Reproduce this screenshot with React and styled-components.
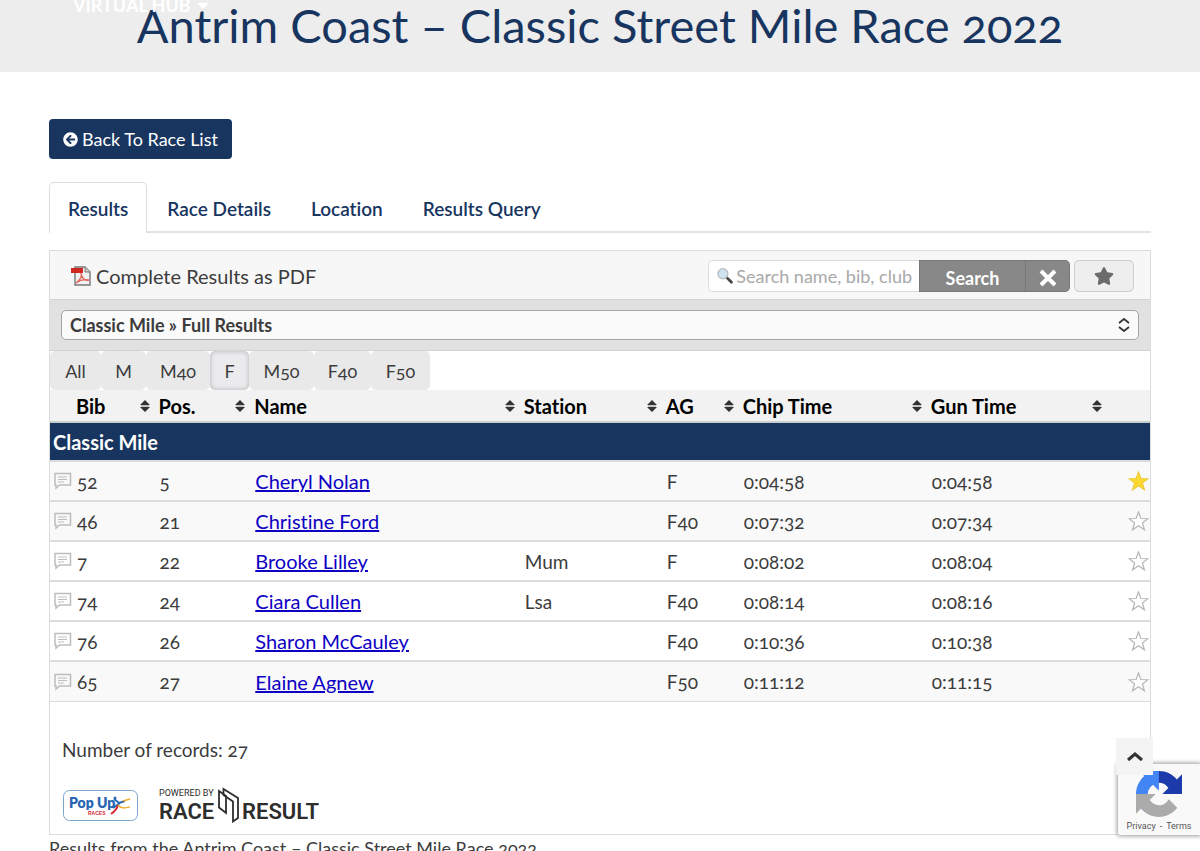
import React, { useState } from 'react'
import styled, { createGlobalStyle } from 'styled-components'
import { FaArrowCircleLeft, FaCaretDown, FaStar } from 'react-icons/fa'

const GlobalStyle = createGlobalStyle`
    * {
        box-sizing: border-box;
    }
    body {
        margin: 0;
        background: #fff;
        color: #3c3c3c;
        font-family: Lato, "Open Sans", sans-serif;
        font-size: 19px;
        font-variant-numeric: oldstyle-nums;
        font-variant-ligatures: no-common-ligatures;
    }
    button, input, select {
        font: inherit;
        color: inherit;
    }
`
const Screen = styled.div`
    position: relative;
    height: 100vh;
    overflow: hidden;
`
const Banner = styled.header`
    height: 72px;
    background: #ededed;
    text-align: center;
`
const Title = styled.h1`
    margin: 0;
    font-size: 47px;
    line-height: 50px;
    font-weight: 400;
    color: #17355f;
    white-space: nowrap;
`
const HubLink = styled.a`
    position: absolute;
    top: -6px;
    left: 73px;
    display: flex;
    align-items: center;
    gap: 3px;
    font-size: 18px;
    line-height: 22px;
    font-weight: 700;
    color: #fff;
    text-decoration: none;
`
const Main = styled.main`
    padding: 47px 49px 0;
`
const BackLink = styled.a`
    display: inline-flex;
    align-items: center;
    gap: 4px;
    height: 40px;
    padding: 0 14px;
    border-radius: 4px;
    background: #17355f;
    color: #fff;
    font-size: 18px;
    text-decoration: none;
`
const Tabs = styled.nav`
    display: flex;
    margin-top: 23px;
    border-bottom: 2px solid #e2e2e2;
`
const Tab = styled.button`
    height: 51px;
    margin-bottom: -2px;
    padding: 0 ${({ $active }) => ($active ? 18 : 19)}px;
    border: 1px solid ${({ $active }) => ($active ? '#dedede' : 'transparent')};
    border-bottom: none;
    border-radius: 5px 5px 0 0;
    background: ${({ $active }) => ($active ? '#fff' : 'transparent')};
    color: #17355f;
    font-weight: 600;
    font-size: 19px;
    cursor: pointer;
`
const Panel = styled.section`
    margin-top: 17px;
    border: 1px solid #dcdcdc;
`
const Toolbar = styled.div`
    display: flex;
    align-items: center;
    justify-content: space-between;
    height: 49px;
    padding: 1px 16px 0 21px;
    border-bottom: 1px solid #d4d4d4;
    background: #f7f7f7;
`
const PdfLink = styled.a`
    display: flex;
    align-items: center;
    gap: 5px;
    color: #3c3c3c;
    font-size: 20px;
    text-decoration: none;
`
const SearchForm = styled.form`
    display: flex;
    height: 32px;
`
const SearchBox = styled.label`
    display: flex;
    align-items: center;
    gap: 3px;
    width: 211px;
    padding-left: 8px;
    border: 1px solid #dcdcdc;
    border-right: none;
    border-radius: 5px 0 0 5px;
    background: #fff;
`
const SearchInput = styled.input`
    width: 100%;
    min-width: 0;
    padding: 0;
    border: none;
    outline: none;
    background: none;
    font-size: 18px;
    &::placeholder {
        color: #a9a9a9;
        opacity: 1;
    }
`
const GreyButton = styled.button`
    display: flex;
    align-items: center;
    justify-content: center;
    width: ${({ $wide }) => ($wide ? 107 : 44)}px;
    padding: 4px 0 0;
    border: 1px solid #777;
    border-left-width: ${({ $wide }) => ($wide ? 1 : 0)}px;
    border-radius: ${({ $wide }) => ($wide ? '0' : '0 5px 5px 0')};
    background: #888;
    color: #fff;
    font-size: 18px;
    font-weight: 700;
`
const FavButton = styled.button`
    display: flex;
    align-items: center;
    justify-content: center;
    width: 60px;
    margin-left: 4px;
    border: 1px solid #cfcfcf;
    border-radius: 5px;
    background: #eee;
    color: #6b6b6b;
    font-size: 20px;
`
const ListBar = styled.div`
    display: grid;
    align-items: center;
    height: 51px;
    padding: 0 11px;
    border-bottom: 1px solid #d4d4d4;
    background: #e1e1e1;
`
const ListSelect = styled.select`
    grid-area: 1 / 1;
    width: 100%;
    height: 30px;
    padding: 0 8px;
    border: 1px solid #a5a5a5;
    border-radius: 5px;
    background: #fafafa;
    appearance: none;
    font-size: 18px;
    line-height: 24px;
    font-weight: 700;
`
const SelectArrows = styled.svg`
    grid-area: 1 / 1;
    justify-self: end;
    margin-right: 9px;
    pointer-events: none;
`
const Filters = styled.div`
    display: flex;
    height: 39px;
`
const Filter = styled.button`
    width: ${({ $width }) => $width}px;
    padding: 0;
    border: none;
    border-radius: 5px;
    background: ${({ $active }) => ($active ? '#ebebed' : '#e9e9e9')};
    box-shadow: ${({ $active }) => ($active ? 'inset 0 0 5px #b4b4b8' : 'none')};
    font-size: 18px;
`
const ResultsTable = styled.table`
    width: 100%;
    table-layout: fixed;
    border-collapse: collapse;
    text-align: left;
`
const HeadCell = styled.th`
    height: 32px;
    padding: 0 6px 0 ${({ $first }) => ($first ? 26 : 3)}px;
    border-bottom: 2px solid #c9cfcc;
    background: #f2f2f2;
    color: #000;
    font-size: 20px;
    line-height: 30px;
`
const HeadLabel = styled.span`
    display: flex;
    align-items: center;
    justify-content: space-between;
`
const GroupCell = styled.th`
    height: 39px;
    padding: 0 3px;
    background: #17355f;
    color: #fff;
    font-size: 20px;
    line-height: 30px;
`
const Row = styled.tr`
    background: ${({ $shaded }) => ($shaded ? '#f9f9f9' : '#fff')};
`
const Cell = styled.td`
    height: 40px;
    padding: 0 4px;
    border-top: 2px solid #dcdcdc;
    white-space: nowrap;
`
const BibCell = styled.div`
    display: flex;
    align-items: center;
    gap: 5px;
`
const StarCell = styled(Cell)`
    padding: 0 1px 0 0;
`
const StarButton = styled.button`
    display: block;
    margin-left: auto;
    padding: 0;
    border: none;
    background: none;
    line-height: 0;
`
const NameLink = styled.a`
    color: #0d00c4;
    font-size: 20px;
    text-decoration: underline;
`
const PanelFoot = styled.footer`
    padding: 35px 12px 11px;
    border-top: 1px solid #dcdcdc;
`
const Records = styled.p`
    margin: 0;
    line-height: 26px;
`
const Logos = styled.div`
    display: flex;
    align-items: center;
    gap: 21px;
    margin-top: 24px;
    padding-left: 1px;
`
const Caption = styled.p`
    margin: 0;
    font-size: 18px;
    line-height: 26px;
`
const TopButton = styled.button`
    position: absolute;
    right: 47px;
    bottom: 76px;
    z-index: 2;
    display: flex;
    align-items: center;
    justify-content: center;
    width: 37px;
    height: 37px;
    padding: 0 0 2px;
    border: none;
    background: #f4f4f4;
`
const Captcha = styled.aside`
    position: absolute;
    right: 0;
    bottom: 16px;
    display: flex;
    flex-direction: column;
    align-items: center;
    width: 82px;
    height: 71px;
    padding-top: 7px;
    border-radius: 2px 0 0 2px;
    background: #f9f9f9;
    box-shadow: 0 0 4px 1px #999;
`
const CaptchaLinks = styled.div`
    display: flex;
    gap: 4px;
    margin-top: 3px;
    font-family: Roboto, sans-serif;
    font-size: 9px;
    line-height: 12px;
`
const SmallLink = styled.a`
    color: #555;
    text-decoration: none;
`

const PdfIcon = () => (
    <svg width="20" height="20" viewBox="0 0 20 20" aria-hidden="true">
        <path d="M4 1h10l5 5v13H4z" fill="#f1f1f1" stroke="#777" strokeWidth="1.4" />
        <path d="M14 1v5h5" fill="#ccc" stroke="#777" />
        <path d="M0 2h12v5H0z" fill="#cf2720" />
        <path d="M5 17c4-3 6-7 5-10 1 6 4 8 8 7-5-1-9 0-13 3z" fill="none" stroke="#e06a62" strokeWidth="1.4" />
    </svg>
)

const Magnifier = () => (
    <svg width="18" height="18" viewBox="0 0 18 18" aria-hidden="true">
        <path d="m10 10 6 6" stroke="#444" strokeWidth="3" strokeLinecap="round" />
        <circle cx="6.500" cy="6.500" r="5.500" fill="#cfe4f1" stroke="#b9c0c4" strokeWidth="1.500" />
    </svg>
)

const CommentIcon = () => (
    <svg width="18" height="18" viewBox="0 0 18 18" fill="none" stroke="#bdbdbd" aria-hidden="true">
        <path d="M1 1.500h15.500v11.500H5.500L2 16V13H1z" strokeWidth="1.500" />
        <path d="M4 5h9M4 7.500h9M4 10h6" />
    </svg>
)

const SortIcon = () => (
    <svg width="10" height="12" viewBox="0 0 10 12" fill="#333" aria-hidden="true">
        <path d="M5 0l5 5H0zM5 12l5-5H0z" />
        <path d="M1 6h8" stroke="#999" strokeWidth="1" />
    </svg>
)

const RowStar = ({ filled }) => (
    <svg width="21" height="20" viewBox="0 0 21 20" aria-hidden="true">
        <path
            d="M10.500 1l2.400 6.500 7 .2-5.500 4.300 2 6.800-5.900-4-5.900 4 2-6.800L1.100 7.700l7-.2z"
            fill={filled ? '#fbd92e' : '#fff'}
            stroke={filled ? '#edcb3c' : '#b5b5b5'}
            strokeWidth="1.200"
        />
    </svg>
)

const PopUpLogo = () => (
    <svg width="75" height="31" viewBox="0 0 75 31" role="img" aria-label="Pop Up Races">
        <rect x="0.500" y="0.500" width="74" height="30" rx="6" fill="#fff" stroke="#7ba6cf" />
        <text x="6" y="18" fontSize="14" fontWeight="800" fill="#2866b1">Pop Up</text>
        <text x="25" y="25" fontFamily="Liberation Sans" fontSize="5" fontWeight="700" fill="#d42c34">RACES</text>
        <circle cx="52" cy="8" r="1.500" fill="#2866b1" />
        <path d="M51 9l5 4 6-2M57 13l-7 5" fill="none" stroke="#2866b1" strokeWidth="2" />
        <path d="M55 15c-1 4-4 7-7 9" fill="none" stroke="#d42c34" strokeWidth="2" />
        <path d="M55 15c3 4 7 3 12 2M60 11l7-2" fill="none" stroke="#efae32" strokeWidth="1.500" />
    </svg>
)

const RaceResultLogo = () => (
    <svg width="164" height="36" viewBox="0 0 164 36" fill="#2d2d2d" fontFamily="Roboto" role="img" aria-label="Powered by Race Result">
        <text x="0" y="9" fontSize="9">POWERED BY</text>
        <text x="0" y="32" fontSize="22" fontWeight="600">RACE</text>
        <path d="M60 4v16.500l7 5.500V9zM64.500 2l14.500 9v20l-5 3.500V14.500L64.500 8z" fill="none" stroke="#2d2d2d" strokeWidth="1.800" />
        <text x="83" y="32" fontSize="22" fontWeight="600">RESULT</text>
    </svg>
)

const RecaptchaLogo = () => (
    <svg width="46" height="46" viewBox="0 0 64 64" aria-hidden="true">
        <path d="M64 31.955l-.033-1.370V4.687l-7.160 7.160C50.948 4.674 42.033.093 32.050.093c-10.400 0-19.622 4.960-25.458 12.640l11.736 11.860a15.550 15.550 0 0 1 4.754-5.334c2.050-1.600 4.952-2.906 8.968-2.906.485 0 .86.057 1.135.163 4.976.393 9.288 3.140 11.828 7.124l-8.307 8.307L64 31.953" fill="#1c3aa9" />
        <path d="M31.862.094l-1.370.033H4.594l7.160 7.160C4.580 13.147 0 22.060 0 32.046c0 10.400 4.960 19.622 12.640 25.458L24.500 45.768a15.550 15.550 0 0 1-5.334-4.754c-1.600-2.050-2.906-4.952-2.906-8.968 0-.485.057-.86.163-1.135.393-4.976 3.140-9.288 7.124-11.828l8.307 8.307L31.860.095" fill="#4285f4" />
        <path d="M.001 32.045l.033 1.370v25.898l7.160-7.160c5.860 7.173 14.774 11.754 24.760 11.754 10.400 0 19.622-4.960 25.458-12.640l-11.736-11.860a15.550 15.550 0 0 1-4.754 5.334c-2.050 1.600-4.952 2.906-8.968 2.906-.485 0-.86-.057-1.135-.163-4.976-.393-9.288-3.140-11.828-7.124l8.307-8.307c-10.522.04-22.400.066-27.295-.005" fill="#ababab" />
    </svg>
)

const tabs = ['Results', 'Race Details', 'Location', 'Results Query']

const filters = [
    { label: 'All', width: 51 },
    { label: 'M', width: 45 },
    { label: 'M40', width: 64 },
    { label: 'F', width: 39 },
    { label: 'M50', width: 65 },
    { label: 'F40', width: 57 },
    { label: 'F50', width: 59 },
]

const columns = [
    { label: 'Bib', width: '9.6%' },
    { label: 'Pos.', width: '8.7%' },
    { label: 'Name', width: '24.5%' },
    { label: 'Station', width: '12.9%' },
    { label: 'AG', width: '7%' },
    { label: 'Chip Time', width: '17.1%' },
    { label: 'Gun Time', width: '16.4%' },
]

const results = [
    { bib: 52, pos: 5, name: 'Cheryl Nolan', station: '', ag: 'F', chip: '0:04:58', gun: '0:04:58', shaded: true },
    { bib: 46, pos: 21, name: 'Christine Ford', station: '', ag: 'F40', chip: '0:07:32', gun: '0:07:34', shaded: true },
    { bib: 7, pos: 22, name: 'Brooke Lilley', station: 'Mum', ag: 'F', chip: '0:08:02', gun: '0:08:04' },
    { bib: 74, pos: 24, name: 'Ciara Cullen', station: 'Lsa', ag: 'F40', chip: '0:08:14', gun: '0:08:16' },
    { bib: 76, pos: 26, name: 'Sharon McCauley', station: '', ag: 'F40', chip: '0:10:36', gun: '0:10:38' },
    { bib: 65, pos: 27, name: 'Elaine Agnew', station: '', ag: 'F50', chip: '0:11:12', gun: '0:11:15', shaded: true },
]

const App = () => {
    const [tab, setTab] = useState('Results')
    const [group, setGroup] = useState('F')
    const [favourites, setFavourites] = useState([52])

    const toggleFavourite = (bib) => {
        setFavourites(favourites.includes(bib) ? favourites.filter((b) => b !== bib) : [...favourites, bib])
    }

    return (
        <Screen>
            <GlobalStyle />
            <Banner>
                <Title>Antrim Coast – Classic Street Mile Race 2022</Title>
                <HubLink href="#hub">VIRTUAL HUB <FaCaretDown /></HubLink>
            </Banner>
            <Main>
                <BackLink href="#races"><FaArrowCircleLeft size={15} /> Back To Race List</BackLink>
                <Tabs>
                    {tabs.map((name) => (
                        <Tab key={name} $active={name === tab} onClick={() => setTab(name)}>{name}</Tab>
                    ))}
                </Tabs>
                <Panel>
                    <Toolbar>
                        <PdfLink href="#pdf"><PdfIcon /> Complete Results as PDF</PdfLink>
                        <SearchForm onSubmit={(e) => e.preventDefault()}>
                            <SearchBox>
                                <Magnifier />
                                <SearchInput type="text" aria-label="Search" placeholder="Search name, bib, club" />
                            </SearchBox>
                            <GreyButton type="submit" $wide>Search</GreyButton>
                            <GreyButton type="reset" aria-label="Clear">
                                <svg width="18" height="18" viewBox="0 0 18 18" stroke="#fff" strokeWidth="4"><path d="M2 2l14 14M16 2L2 16" /></svg>
                            </GreyButton>
                            <FavButton type="button" aria-label="Favourites"><FaStar /></FavButton>
                        </SearchForm>
                    </Toolbar>
                    <ListBar>
                        <ListSelect aria-label="Result list">
                            <option>Classic Mile » Full Results</option>
                        </ListSelect>
                        <SelectArrows width="12" height="14" viewBox="0 0 12 14" fill="none" stroke="#333" strokeWidth="1.800">
                            <path d="M1 5l5-4 5 4M1 9l5 4 5-4" />
                        </SelectArrows>
                    </ListBar>
                    <Filters>
                        {filters.map(({ label, width }) => (
                            <Filter key={label} $width={width} $active={label === group} onClick={() => setGroup(label)}>{label}</Filter>
                        ))}
                    </Filters>
                    <ResultsTable>
                        <colgroup>
                            {columns.map(({ label, width }) => <col key={label} width={width} />)}
                            <col />
                        </colgroup>
                        <thead>
                            <tr>
                                {columns.map(({ label }, i) => (
                                    <HeadCell key={label} $first={i === 0}>
                                        <HeadLabel>{label}<SortIcon /></HeadLabel>
                                    </HeadCell>
                                ))}
                                <HeadCell aria-label="Favourite" />
                            </tr>
                        </thead>
                        <tbody>
                            <tr>
                                <GroupCell colSpan={8}>Classic Mile</GroupCell>
                            </tr>
                            {results.map((r) => (
                                <Row key={r.bib} $shaded={r.shaded}>
                                    <Cell><BibCell><CommentIcon />{r.bib}</BibCell></Cell>
                                    <Cell>{r.pos}</Cell>
                                    <Cell><NameLink href={`#${r.bib}`}>{r.name}</NameLink></Cell>
                                    <Cell>{r.station}</Cell>
                                    <Cell>{r.ag}</Cell>
                                    <Cell>{r.chip}</Cell>
                                    <Cell>{r.gun}</Cell>
                                    <StarCell>
                                        <StarButton aria-label={`Favourite ${r.name}`} onClick={() => toggleFavourite(r.bib)}>
                                            <RowStar filled={favourites.includes(r.bib)} />
                                        </StarButton>
                                    </StarCell>
                                </Row>
                            ))}
                        </tbody>
                    </ResultsTable>
                    <PanelFoot>
                        <Records>Number of records: 27</Records>
                        <Logos>
                            <PopUpLogo />
                            <RaceResultLogo />
                        </Logos>
                    </PanelFoot>
                </Panel>
                <Caption>Results from the Antrim Coast – Classic Street Mile Race 2022</Caption>
            </Main>
            <TopButton aria-label="Back to top">
                <svg width="16" height="10" viewBox="0 0 16 10" fill="none" stroke="#333" strokeWidth="3.200"><path d="M1 9l7-6 7 6" /></svg>
            </TopButton>
            <Captcha>
                <RecaptchaLogo />
                <CaptchaLinks>
                    <SmallLink href="#privacy">Privacy</SmallLink>
                    <span>-</span>
                    <SmallLink href="#terms">Terms</SmallLink>
                </CaptchaLinks>
            </Captcha>
        </Screen>
    )
}

export default App
